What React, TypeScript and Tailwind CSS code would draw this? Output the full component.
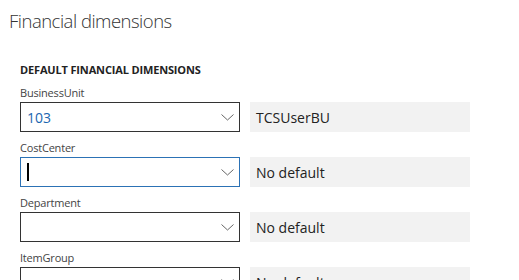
import React from 'react';

type Row = { label: string; value: string; resolved: string; focused?: boolean };

const ROWS: Row[] = [
  { label: 'BusinessUnit', value: '103', resolved: 'TCSUserBU' },
  { label: 'CostCenter', value: '', resolved: 'No default', focused: true },
  { label: 'Department', value: '', resolved: 'No default' },
  { label: 'ItemGroup', value: '', resolved: 'No default' },
];

const Chevron = () => (
  <svg width="13" height="7" viewBox="0 0 13 7" fill="none" className="shrink-0">
    <path d="M0.5 0.5 L6.5 6 L12.5 0.5" stroke="#666" strokeWidth="1" />
  </svg>
);

export default function App() {
  return (
    <div
      className="w-[519px] h-[280px] overflow-hidden bg-white text-[#333]"
      style={{ fontFamily: '"Open Sans", "Noto Sans", sans-serif' }}
    >
      <h1 className="pl-[9px] pt-[7px] text-[18.5px] leading-[28px] font-light text-[#333] tracking-[-0.5px]">
        Financial dimensions
      </h1>
      <div className="pl-[20px] pt-[28px]">
        <h2 className="text-[11px] leading-[14px] font-bold text-[#222] tracking-[-0.15px]">
          DEFAULT FINANCIAL DIMENSIONS
        </h2>
        <div className="mt-[9px] flex flex-col gap-[9px]">
          {ROWS.map((row) => (
            <div key={row.label} className="flex flex-col">
              <label className="text-[11px] leading-[14px] text-[#444] tracking-[-0.2px]">{row.label}</label>
              <div className="mt-[2px] flex items-center gap-[10px]">
                <div
                  className={`w-[220px] h-[30px] flex items-center justify-between pl-[6px] pr-[5px] border ${
                    row.focused ? 'border-[#2c72b5]' : 'border-[#333]'
                  }`}
                >
                  <span className="text-[14px] text-[#1a66b0] flex items-center">
                    {row.value}
                    {row.focused && <span className="block w-[2px] h-[18px] bg-black" />}
                  </span>
                  <Chevron />
                </div>
                <div className="w-[220px] h-[30px] bg-[#f2f2f2] flex items-center pl-[6px] text-[14px] text-[#222]">
                  {row.resolved}
                </div>
              </div>
            </div>
          ))}
        </div>
      </div>
    </div>
  );
}
